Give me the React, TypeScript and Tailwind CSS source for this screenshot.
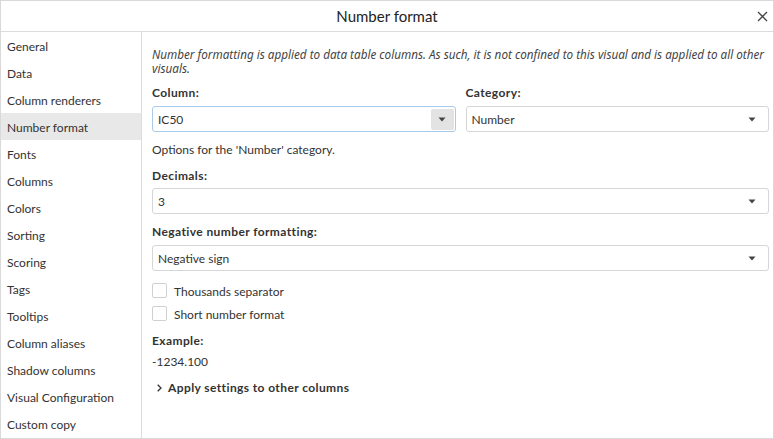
const items = [
  "General",
  "Data",
  "Column renderers",
  "Number format",
  "Fonts",
  "Columns",
  "Colors",
  "Sorting",
  "Scoring",
  "Tags",
  "Tooltips",
  "Column aliases",
  "Shadow columns",
  "Visual Configuration",
  "Custom copy",
];

function Caret() {
  return (
    <svg width="8" height="5" viewBox="0 0 8 5">
      <path d="M0.5 0.5 H7.5 L4 4.5 Z" fill="#444" />
    </svg>
  );
}

function Select({ value }: { value: string }) {
  return (
    <div className="flex h-[26px] items-center justify-between rounded-[3px] border border-[#d6d6d6] bg-white pl-[5px] pr-[12px]">
      <span className="pt-[2px]">{value}</span>
      <Caret />
    </div>
  );
}

function Check({ label }: { label: string }) {
  return (
    <div className="flex h-[15px] items-center gap-[7px] leading-[15px]">
      <div className="h-[15px] w-[15px] rounded-[2px] border border-[#d0d0d0] bg-white" />
      <span className="pt-[1px]">{label}</span>
    </div>
  );
}

function Label({ children }: { children: string }) {
  return <div className="h-[16px] font-bold leading-[16px] tracking-[0.4px]">{children}</div>;
}

export default function App() {
  return (
    <div
      className="flex h-[439px] w-[774px] flex-col overflow-hidden border border-[#d9d9d9] bg-white text-[12px] text-[#333]"
      style={{ fontFamily: "'Segoe UI', Lato, 'Noto Sans', sans-serif" }}
    >
      {/* Header */}
      <div className="relative flex h-[31px] shrink-0 items-center justify-center border-b border-[#dcdcdc]">
        <span className="pt-[1px] text-[15px] text-[#222]">Number format</span>
        <svg className="absolute right-[5px] top-[10px]" width="11" height="11" viewBox="0 0 11 11">
          <path d="M1 1 L10 10 M10 1 L1 10" stroke="#444" strokeWidth="1.3" />
        </svg>
      </div>

      <div className="flex min-h-0 flex-1">
        {/* Sidebar */}
        <div className="w-[141px] shrink-0 border-r border-[#dcdcdc]">
          {items.map((it) => (
            <div
              key={it}
              className={`flex h-[27px] items-center pl-[6px] pt-[3px] ${it === "Number format" ? "bg-[#e8e8e8]" : ""}`}
            >
              {it}
            </div>
          ))}
        </div>

        {/* Content */}
        <div className="flex flex-1 flex-col pl-[10px] pr-[4px] pt-[15px]">
          <p
            className="text-[11.7px] italic leading-[14px] text-[#444]"
            style={{ fontFamily: "'Noto Sans', 'Open Sans', sans-serif" }}
          >
            Number formatting is applied to data table columns. As such, it is not confined to this visual and is
            applied to all other visuals.
          </p>

          <div className="mt-[10px] grid grid-cols-2 gap-[10px]">
            <div>
              <Label>Column:</Label>
              <div className="mt-[5px] flex h-[26px] items-center justify-between rounded-[3px] border border-[#a9cbe9] bg-white pl-[5px] pr-[1px]">
                <span className="pt-[2px]">IC50</span>
                <div className="flex h-[21px] w-[23px] items-center justify-center rounded-[2px] bg-[#e3e3e3]">
                  <Caret />
                </div>
              </div>
            </div>
            <div>
              <Label>Category:</Label>
              <div className="mt-[5px]">
                <Select value="Number" />
              </div>
            </div>
          </div>

          <div className="mt-[10px] h-[16px] leading-[16px]">Options for the 'Number' category.</div>

          <div className="mt-[10px]">
            <Label>Decimals:</Label>
          </div>
          <div className="mt-[4px]">
            <Select value="3" />
          </div>

          <div className="mt-[10px]">
            <Label>Negative number formatting:</Label>
          </div>
          <div className="mt-[5px]">
            <Select value="Negative sign" />
          </div>

          <div className="mt-[12px] flex flex-col gap-[8px]">
            <Check label="Thousands separator" />
            <Check label="Short number format" />
          </div>

          <div className="mt-[12px]">
            <Label>Example:</Label>
          </div>
          <div className="mt-[5px] h-[16px] leading-[16px]">-1234.100</div>

          <div className="mt-[10px] flex h-[16px] items-center gap-[6px] pl-[5px] font-bold tracking-[0.4px]">
            <svg width="5" height="8" viewBox="0 0 5 8">
              <path d="M0.7 0.7 L4 4 L0.7 7.3" stroke="#333" strokeWidth="1.3" fill="none" />
            </svg>
            <span>Apply settings to other columns</span>
          </div>
        </div>
      </div>
    </div>
  );
}
